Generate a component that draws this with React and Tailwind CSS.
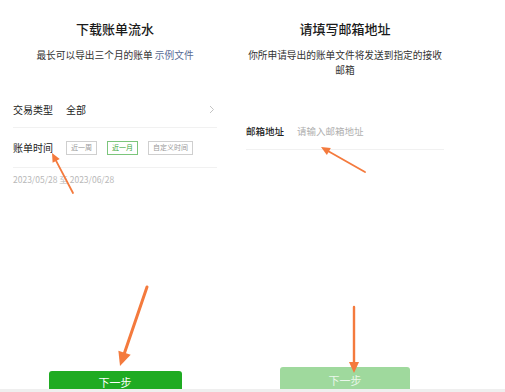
import React from 'react';

const font = { fontFamily: '"Noto Sans CJK SC", "Noto Sans", sans-serif' };

function Arrow({ from, to, head = 9, spread = 4.5, width = 2 }) {
  const dx = to[0] - from[0];
  const dy = to[1] - from[1];
  const len = Math.hypot(dx, dy);
  const ux = dx / len;
  const uy = dy / len;
  const bx = to[0] - ux * head;
  const by = to[1] - uy * head;
  const px = -uy * spread;
  const py = ux * spread;
  return (
    <g>
      <line x1={from[0]} y1={from[1]} x2={bx + ux} y2={by + uy} stroke="#f47a3d" strokeWidth={width} strokeLinecap="round" />
      <polygon points={`${to[0]},${to[1]} ${bx + px},${by + py} ${bx - px},${by - py}`} fill="#f47a3d" />
    </g>
  );
}

function Chip({ children, active }) {
  return (
    <span
      className={
        active
          ? 'h-[14px] px-[4px] flex items-center border border-[#7cc57c] text-[#3aa83a] text-[7px] leading-none'
          : 'h-[14px] px-[4px] flex items-center border border-[#cfcfcf] text-[#999] text-[7px] leading-none'
      }
    >
      {children}
    </span>
  );
}

function BillPanel() {
  return (
    <div className="w-[230px] shrink-0 px-[13px]">
      <div className="pt-[20px] text-center text-[13px] leading-[18px] font-medium text-[#1a1a1a]">下载账单流水</div>
      <div className="mt-[10px] text-center text-[9.7px] leading-[14px] text-[#333]">
        最长可以导出三个月的账单 <span className="text-[#576b95]">示例文件</span>
      </div>
      <div className="mt-[30px] h-[36px] flex items-center border-b border-[#f1f1f1] text-[10px] text-[#222]">
        <span className="w-[53px]">交易类型</span>
        <span className="flex-1">全部</span>
        <svg width="6" height="9" viewBox="0 0 6 9" className="mr-[2px]">
          <path d="M1 1l3.5 3.5L1 8" fill="none" stroke="#c4c4c4" strokeWidth="1" />
        </svg>
      </div>
      <div className="h-[40px] flex items-center border-b border-[#f1f1f1] text-[10px] text-[#222]">
        <span className="w-[53px]">账单时间</span>
        <div className="flex gap-[10px]">
          <Chip>近一周</Chip>
          <Chip active>近一月</Chip>
          <Chip>自定义时间</Chip>
        </div>
      </div>
      <div className="mt-[5px] text-[8.5px] leading-[12px] text-[#b8b8b8]">2023/05/28 至 2023/06/28</div>
      <div className="mt-[186px] mx-auto w-[133px] h-[22px] rounded-[3px] bg-[#1fab22] flex items-center justify-center text-[11px] leading-none text-white">
        下一步
      </div>
    </div>
  );
}

function EmailPanel() {
  return (
    <div className="w-[230px] shrink-0 px-[16px]">
      <div className="pt-[20px] text-center text-[13px] leading-[18px] font-medium text-[#1a1a1a]">请填写邮箱地址</div>
      <div className="mt-[10px] -mx-[4px] text-center text-[9.7px] leading-[15px] text-[#333]">
        你所申请导出的账单文件将发送到指定的接收
        <br />
        邮箱
      </div>
      <div className="mt-[36px] h-[36px] flex items-center border-b border-[#f1f1f1] text-[9.5px]">
        <span className="w-[51px] font-medium text-[#222]">邮箱地址</span>
        <span className="text-[#b0b0b0]">请输入邮箱地址</span>
      </div>
      <div className="mt-[217px] mx-auto w-[130px] h-[26px] rounded-[3px] bg-[#9fd99d] flex items-center justify-center text-[11px] text-[#eaf7ea]">
        下一步
      </div>
    </div>
  );
}

export default function App() {
  return (
    <div className="relative w-[505px] h-[392px] bg-white flex flex-col" style={font}>
      <div className="h-[389px] shrink-0 overflow-hidden flex items-start">
        <BillPanel />
        <EmailPanel />
      </div>
      <div className="h-[3px] bg-[#efefef]" />
      <svg className="absolute inset-0 pointer-events-none" width="505" height="392">
        <Arrow from={[73, 193]} to={[52, 153]} head={9} spread={4} width={1.8} />
        <Arrow from={[147, 287]} to={[120, 366]} head={14} spread={6.5} width={3} />
        <Arrow from={[365, 172]} to={[321, 147]} head={9} spread={4} width={1.8} />
        <Arrow from={[354, 307]} to={[354, 373]} head={11} spread={5} width={2.4} />
      </svg>
    </div>
  );
}
